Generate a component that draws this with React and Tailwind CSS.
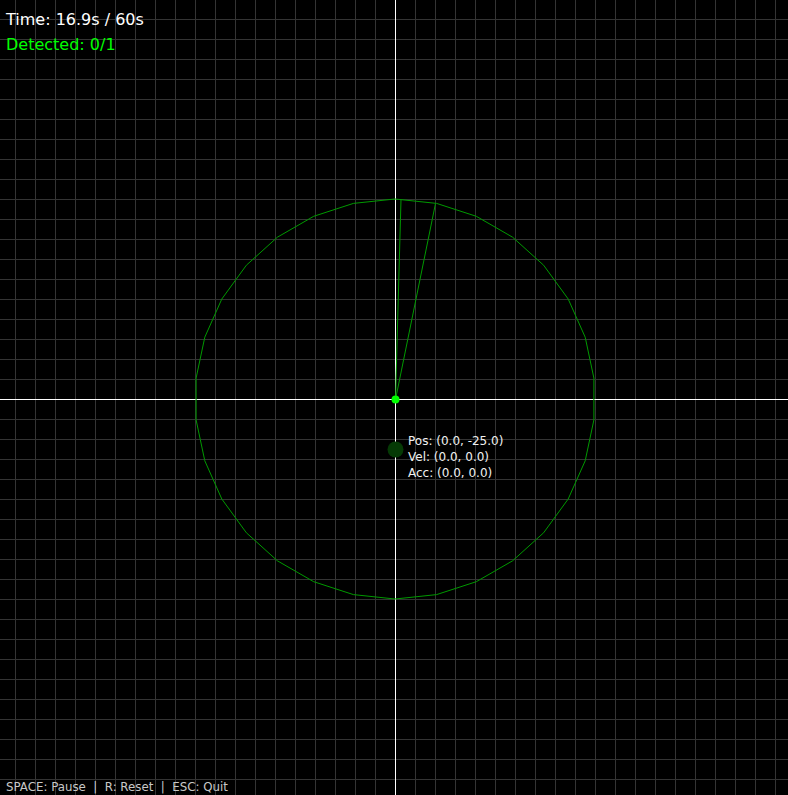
import React from "react";

const W = 788;
const H = 795;
const CX = 395;
const CY = 399;

// 30-sided range ring, vertices offset 6deg from the horizontal
const ring = Array.from({ length: 30 }, (_, k) => {
  const a = ((6 + 12 * k) * Math.PI) / 180;
  return `${(CX + 200 * Math.cos(a)).toFixed(1)},${(CY - 200 * Math.sin(a)).toFixed(1)}`;
}).join(" ");

const vLines = Array.from({ length: 39 }, (_, i) => 15 + i * 20);
const hLines = Array.from({ length: 39 }, (_, i) => 19 + i * 20);

function Field() {
  return (
    <svg width={W} height={H} viewBox={`0 0 ${W} ${H}`} className="block" shapeRendering="crispEdges">
      <rect width={W} height={H} fill="#000000" />
      {vLines.map((x) => (
        <line key={`v${x}`} x1={x + 0.5} y1={0} x2={x + 0.5} y2={H} stroke="#343434" strokeWidth="1" />
      ))}
      {hLines.map((y) => (
        <line key={`h${y}`} x1={0} y1={y + 0.5} x2={W} y2={y + 0.5} stroke="#343434" strokeWidth="1" />
      ))}
      <line x1={CX + 0.5} y1={0} x2={CX + 0.5} y2={H} stroke="#ffffff" strokeWidth="1" />
      <line x1={0} y1={CY + 0.5} x2={W} y2={CY + 0.5} stroke="#ffffff" strokeWidth="1" />
      <g shapeRendering="auto">
        <polygon points={ring} fill="none" stroke="#009a00" strokeWidth="1" />
        <line x1={CX + 0.5} y1={CY + 0.5} x2={401} y2={199.5} stroke="#009a00" strokeWidth="1" />
        <line x1={CX + 0.5} y1={CY + 0.5} x2={435.5} y2={203.5} stroke="#009a00" strokeWidth="1" />
        <circle cx={CX + 0.5} cy={449.5} r="8" fill="#053a05" />
        <circle cx={CX + 0.5} cy={CY + 0.5} r="4" fill="#00ff00" />
      </g>
    </svg>
  );
}

export default function App() {
  return (
    <div className="relative w-[788px] h-[795px] overflow-hidden bg-black" style={{ fontFamily: '"DejaVu Sans", Verdana, sans-serif' }}>
      <Field />

      {/* HUD */}
      <div className="absolute left-[6px] top-[7px] flex flex-col text-[16px] leading-[25px]">
        <span className="text-white">Time: 16.9s / 60s</span>
        <span className="text-[#00ff00]">Detected: 0/1</span>
      </div>

      {/* target readout */}
      <div className="absolute left-[408px] top-[433px] flex flex-col text-[12px] leading-[16px] text-[#f0f0f0]">
        <span>Pos: (0.0, -25.0)</span>
        <span>Vel: (0.0, 0.0)</span>
        <span>Acc: (0.0, 0.0)</span>
      </div>

      <div className="absolute left-[6px] top-[779px] whitespace-pre text-[11.8px] leading-[16px] text-[#c8c8c8]">
        SPACE: Pause  |  R: Reset  |  ESC: Quit
      </div>
    </div>
  );
}
